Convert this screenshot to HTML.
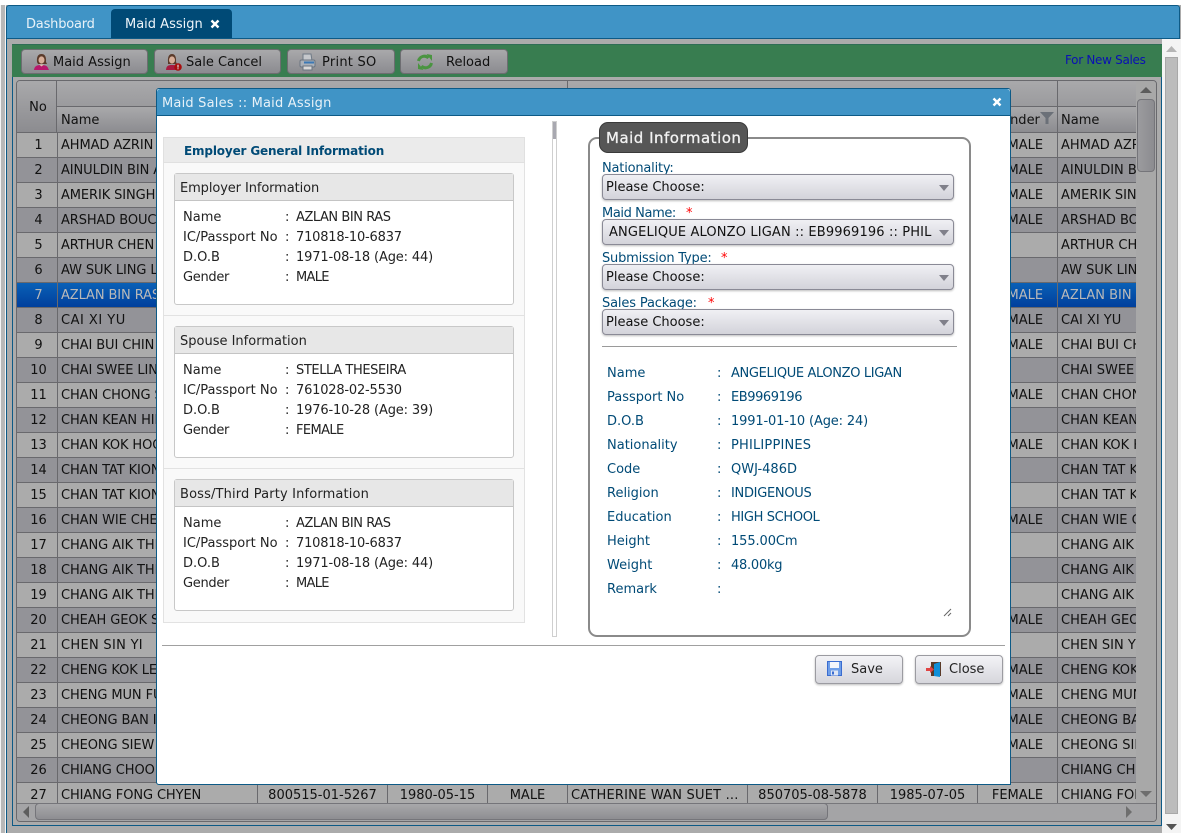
<!DOCTYPE html>
<html><head><meta charset="utf-8"><title>Maid Assign</title>
<style>
html,body{margin:0;padding:0;width:1181px;height:833px;overflow:hidden;background:#ababab;font:13px "DejaVu Sans",sans-serif;color:#111}
div,span{position:absolute;white-space:nowrap;box-sizing:border-box}
svg{position:absolute}
table{position:absolute;left:0;top:0;border-collapse:separate;border-spacing:0;table-layout:fixed;width:1119px;font:13px "DejaVu Sans",sans-serif;color:#111}
td{height:25px;padding:1px 0 0 3px;border-top:1px solid #69696d;border-left:1px solid #69696d;overflow:hidden;white-space:nowrap;box-sizing:border-box;line-height:22px}
td:first-child{border-left:0;text-align:center;padding-left:3px}
td:nth-child(2){letter-spacing:-.1px}
td.c{text-align:center;padding-left:0}
tr{background:#ababab}
tr.d{background:#939398}
tr.s{background:linear-gradient(#0a62b8,#003f9c);color:#b9b9b9}
.btn{height:25px;top:49px;border:1px solid #6d6d71;border-radius:4px;background:linear-gradient(#a9a9ab,#8b8b90);line-height:26px}
.btn span{top:0}
.hd{background:linear-gradient(#a9a9ab,#8c8c90)}
.card{left:174px;width:340px;height:132px;background:#fff;border:1px solid #c8c8c8;border-radius:3px}
.card .t{left:0;top:0;width:338px;height:27px;background:#e7e7e7;border-bottom:1px solid #c4c4c4;line-height:29px;padding-left:5px;color:#222}
.card span{color:#222;line-height:20px;margin-top:1px}
.lb{left:602px;color:#004a76;line-height:16px}
.lb b{color:#f00;font-weight:normal;position:absolute;top:0;letter-spacing:0}
.sel{left:602px;width:352px;height:26px;border:1px solid #8a8a96;border-radius:4px;background:linear-gradient(#f0f0f4,#d3d3da);box-shadow:0 1px 2px #bbb;color:#111;line-height:25px;padding-left:3px}
.sel i{position:absolute;left:336px;top:10px;width:0;height:0;border:5px solid transparent;border-top:6px solid #80808a;border-bottom:0}
.det{color:#004a76;line-height:16px}
.b2{top:655px;width:88px;height:29px;border:1px solid #9b9ba1;border-radius:4px;background:linear-gradient(#f3f3f6,#d6d6dc);box-shadow:0 1px 2px #bbb;color:#222;line-height:28px}
</style></head><body>

<!-- outer window -->
<div style="left:6px;top:5px;width:1174px;height:34px;background:#4094c6;border:1px solid #0d5a86;border-radius:3px 3px 0 0"></div>
<div style="left:6px;top:38px;width:1px;height:795px;background:#0d5a86"></div>
<div style="left:0;top:0;width:6px;height:833px;background:#f4f4f4"></div>
<div style="left:1px;top:0;width:4px;height:833px;background:#b8b8b8"></div>
<div style="left:0;top:0;width:1181px;height:5px;background:#fff"></div>
<span style="left:26px;top:16px;color:#e8f2f8;line-height:17px;letter-spacing:-.2px">Dashboard</span>
<div style="left:111px;top:9px;width:121px;height:29px;background:#004a76;border-radius:4px 4px 0 0"></div>
<span style="left:125px;top:16px;color:#eef5fa;line-height:17px">Maid Assign</span>
<svg style="left:210px;top:19px" width="10" height="10" viewBox="0 0 10 10"><path d="M1.500 1.500L8.500 8.500M8.500 1.500L1.500 8.500" stroke="#fff" stroke-width="2.400"/></svg>

<!-- inner panel border -->
<div style="left:12px;top:44px;width:1150px;height:782px;border:1px solid #0d5a86;border-top:0"></div>

<!-- green toolbar -->
<div style="left:12px;top:44px;width:1150px;height:33px;background:#387d50;border-top:1px solid #2f6d55"></div>
<div class="btn" style="left:21px;width:127px"><span style="left:31px">Maid Assign</span>
<svg style="left:9px;top:2px" width="20" height="20" viewBox="0 0 20 20"><path d="M6 10C5.500 4 7.500 2 10.500 2s5 2 4.500 8l1 2H7z" fill="#5a3a2a"/><ellipse cx="10.500" cy="8" rx="3" ry="3.600" fill="#d8ae98"/><path d="M3 18c.5-4 3-5 7-5s6.500 1 7 3l1 2z" fill="#b8186c"/><path d="M8 12.500h5l-2.500 2z" fill="#e3c0ae"/></svg></div>
<div class="btn" style="left:154px;width:127px"><span style="left:31px">Sale Cancel</span>
<svg style="left:8px;top:2px" width="20" height="20" viewBox="0 0 20 20"><path d="M5 10C4.500 4 6.500 2 9 2s4.500 2 4 8l1 2H5z" fill="#5a3a2a"/><ellipse cx="9" cy="8" rx="3" ry="3.600" fill="#d8ae98"/><path d="M3 18c.3-4 2-5 6-5s5 1 6 3v2z" fill="#a81a40"/><circle cx="15" cy="15" r="3.800" fill="#a80d0d"/><path d="M15 12.800v2.800M15 16.300v1" stroke="#ddd" stroke-width="1.200"/></svg></div>
<div class="btn" style="left:287px;width:108px"><span style="left:34px;letter-spacing:.25px">Print SO</span>
<svg style="left:10px;top:2px" width="19" height="20" viewBox="0 0 19 20"><path d="M5 2h8l1 7H5z" fill="#c5c8cc" stroke="#6f7a86"/><rect x="2" y="8" width="15" height="7" rx="1.500" fill="#aab0b8" stroke="#6a7480"/><rect x="6" y="9.500" width="10" height="2" fill="#3b78b4"/><rect x="5" y="14" width="9" height="4" fill="#d8d8d8" stroke="#6a7480"/></svg></div>
<div class="btn" style="left:400px;width:108px"><span style="left:45px">Reload</span>
<svg style="left:15px;top:3px" width="18" height="18" viewBox="0 0 18 18" fill="none" stroke="#4a9440" stroke-width="3"><path d="M2.500 8C3.500 3.500 9 1.500 12.500 5"/><path d="M15.500 10c-1 4.500-6.500 6.500-10 3"/><path d="M10.500 1l5.500 1v6z" fill="#4a9440" stroke="none"/><path d="M7.500 17L2 16v-6z" fill="#4a9440" stroke="none"/></svg></div>
<span style="left:1065px;top:53px;color:#0a10b4;font-size:12px;line-height:15px;letter-spacing:-.3px">For New Sales</span>

<!-- grid -->
<div style="left:16px;top:80px;width:1141px;height:742px;border:1px solid #69696d;border-radius:4px;background:#a8a8a8;overflow:hidden">
 <div style="left:0;top:0;width:1119px;height:51px;overflow:hidden" class="hd">
  <div class="hd" style="left:0;top:0;width:40px;height:51px;border-right:1px solid #69696d;text-align:center;line-height:54px;color:#111;padding-left:3px">No</div>
  <div style="left:40px;top:25px;width:1079px;height:1px;background:#69696d"></div>
  <div class="hd" style="left:40px;top:26px;width:1079px;height:25px"></div>
  <div style="left:550px;top:0;width:1px;height:26px;background:#69696d"></div>
  <div style="left:1040px;top:0;width:1px;height:51px;background:#69696d"></div>
  <span style="left:44px;top:31px;line-height:17px">Name</span>
  <span style="left:975px;top:31px;line-height:17px">Gender</span>
  <svg style="left:1023px;top:31px" width="14" height="12" viewBox="0 0 14 12"><path d="M0 0h14L8.500 6v6h-3V6z" fill="#6b7078"/></svg>
  <span style="left:1044px;top:31px;line-height:17px">Name</span>
 </div>
 <div style="left:0;top:51px;width:1119px;height:671px;overflow:hidden">
 <table><colgroup><col style="width:40px"><col style="width:200px"><col style="width:130px"><col style="width:100px"><col style="width:80px"><col style="width:180px"><col style="width:130px"><col style="width:100px"><col style="width:80px"><col style="width:79px"></colgroup>
 <tr><td>1</td><td>AHMAD AZRIN BIN</td><td></td><td></td><td></td><td></td><td></td><td></td><td class="c">FEMALE</td><td>AHMAD AZRIN BIN</td></tr>
 <tr class="d"><td>2</td><td>AINULDIN BIN ALI</td><td></td><td></td><td></td><td></td><td></td><td></td><td class="c">FEMALE</td><td>AINULDIN BIN ALI</td></tr>
 <tr><td>3</td><td>AMERIK SINGH</td><td></td><td></td><td></td><td></td><td></td><td></td><td class="c">FEMALE</td><td>AMERIK SINGH</td></tr>
 <tr class="d"><td>4</td><td>ARSHAD BOUCHER</td><td></td><td></td><td></td><td></td><td></td><td></td><td class="c">FEMALE</td><td>ARSHAD BOUCHER</td></tr>
 <tr><td>5</td><td>ARTHUR CHEN</td><td></td><td></td><td></td><td></td><td></td><td></td><td class="c"></td><td>ARTHUR CHEN</td></tr>
 <tr class="d"><td>6</td><td>AW SUK LING LIM</td><td></td><td></td><td></td><td></td><td></td><td></td><td class="c"></td><td>AW SUK LING LIM</td></tr>
 <tr class="s"><td>7</td><td>AZLAN BIN RAS</td><td></td><td></td><td></td><td></td><td></td><td></td><td class="c">FEMALE</td><td>AZLAN BIN RAS</td></tr>
 <tr class="d"><td>8</td><td style="letter-spacing:.5px">CAI XI YU</td><td></td><td></td><td></td><td></td><td></td><td></td><td class="c">FEMALE</td><td>CAI XI YU</td></tr>
 <tr><td>9</td><td>CHAI BUI CHIN</td><td></td><td></td><td></td><td></td><td></td><td></td><td class="c">FEMALE</td><td>CHAI BUI CHIN</td></tr>
 <tr class="d"><td>10</td><td>CHAI SWEE LIN</td><td></td><td></td><td></td><td></td><td></td><td></td><td class="c"></td><td>CHAI SWEE LIN</td></tr>
 <tr><td>11</td><td>CHAN CHONG SENG</td><td></td><td></td><td></td><td></td><td></td><td></td><td class="c">FEMALE</td><td>CHAN CHONG SENG</td></tr>
 <tr class="d"><td>12</td><td>CHAN KEAN HIN</td><td></td><td></td><td></td><td></td><td></td><td></td><td class="c"></td><td>CHAN KEAN HIN</td></tr>
 <tr><td>13</td><td>CHAN KOK HOONG</td><td></td><td></td><td></td><td></td><td></td><td></td><td class="c">FEMALE</td><td>CHAN KOK HOONG</td></tr>
 <tr class="d"><td>14</td><td>CHAN TAT KIONG</td><td></td><td></td><td></td><td></td><td></td><td></td><td class="c"></td><td>CHAN TAT KIONG</td></tr>
 <tr><td>15</td><td>CHAN TAT KIONG</td><td></td><td></td><td></td><td></td><td></td><td></td><td class="c"></td><td>CHAN TAT KIONG</td></tr>
 <tr class="d"><td>16</td><td>CHAN WIE CHENG</td><td></td><td></td><td></td><td></td><td></td><td></td><td class="c">FEMALE</td><td>CHAN WIE CHENG</td></tr>
 <tr><td>17</td><td>CHANG AIK THIAM</td><td></td><td></td><td></td><td></td><td></td><td></td><td class="c"></td><td>CHANG AIK THIAM</td></tr>
 <tr class="d"><td>18</td><td>CHANG AIK THIAM</td><td></td><td></td><td></td><td></td><td></td><td></td><td class="c"></td><td>CHANG AIK THIAM</td></tr>
 <tr><td>19</td><td>CHANG AIK THIAM</td><td></td><td></td><td></td><td></td><td></td><td></td><td class="c"></td><td>CHANG AIK THIAM</td></tr>
 <tr class="d"><td>20</td><td>CHEAH GEOK SIM</td><td></td><td></td><td></td><td></td><td></td><td></td><td class="c">FEMALE</td><td>CHEAH GEOK SIM</td></tr>
 <tr><td>21</td><td style="letter-spacing:.3px">CHEN SIN YI</td><td></td><td></td><td></td><td></td><td></td><td></td><td class="c"></td><td>CHEN SIN YI</td></tr>
 <tr class="d"><td>22</td><td>CHENG KOK LEONG</td><td></td><td></td><td></td><td></td><td></td><td></td><td class="c">FEMALE</td><td>CHENG KOK LEONG</td></tr>
 <tr><td>23</td><td>CHENG MUN FUN</td><td></td><td></td><td></td><td></td><td></td><td></td><td class="c">FEMALE</td><td>CHENG MUN FUN</td></tr>
 <tr class="d"><td>24</td><td>CHEONG BAN IN</td><td></td><td></td><td></td><td></td><td></td><td></td><td class="c">FEMALE</td><td>CHEONG BAN IN</td></tr>
 <tr><td>25</td><td>CHEONG SIEW MEI</td><td></td><td></td><td></td><td></td><td></td><td></td><td class="c">FEMALE</td><td>CHEONG SIEW MEI</td></tr>
 <tr class="d"><td>26</td><td>CHIANG CHOON</td><td></td><td></td><td></td><td></td><td></td><td></td><td class="c"></td><td>CHIANG CHOON</td></tr>
 <tr><td>27</td><td>CHIANG FONG CHYEN</td><td class="c">800515-01-5267</td><td class="c">1980-05-15</td><td class="c">MALE</td><td style="letter-spacing:.2px">CATHERINE WAN SUET ...</td><td class="c">850705-08-5878</td><td class="c">1985-07-05</td><td class="c">FEMALE</td><td>CHIANG FONG CHYEN</td></tr>
 </table>
 </div>
 <!-- grid scrollbars -->
 <div style="left:1119px;top:0;width:20px;height:740px;background:#a8a8a8"></div>
 <div style="left:0;top:722px;width:1139px;height:18px;background:#a4a4a6;border-top:1px solid #77777b"></div>
 <div style="left:1120px;top:18px;width:18px;height:73px;border:1px solid #75757a;border-radius:4px;background:linear-gradient(90deg,#9b9b9e,#8c8c90)"></div>
 <div style="left:18px;top:722px;width:793px;height:17px;border:1px solid #75757a;border-radius:4px;background:linear-gradient(#a8a8aa,#8e8e92)"></div>
 <svg style="left:1122px;top:5px" width="14" height="8" viewBox="0 0 14 8"><path d="M7 1L13 7H1z" fill="#5c5c5c"/></svg>
 <svg style="left:1122px;top:709px" width="14" height="8" viewBox="0 0 14 8"><path d="M7 7L13 1H1z" fill="#6e6e6e"/></svg>
 <svg style="left:5px;top:725px" width="8" height="12" viewBox="0 0 8 12"><path d="M1 6L7 0V12z" fill="#5e5e5e"/></svg>
 <svg style="left:1108px;top:725px" width="8" height="12" viewBox="0 0 8 12"><path d="M7 6L1 0V12z" fill="#6e6e6e"/></svg>
</div>

<!-- outer scrollbar -->
<div style="left:1162px;top:39px;width:19px;height:794px;background:#f4f4f4"></div>
<div style="left:1165px;top:57px;width:13px;height:757px;background:#bcbcbc;border:1px solid #a8a8a8"></div>
<svg style="left:1165px;top:45px" width="13" height="8" viewBox="0 0 13 8"><path d="M6.500 1L12 7H1z" fill="#b5b5b5"/></svg>
<svg style="left:1165px;top:823px" width="13" height="8" viewBox="0 0 13 8"><path d="M6.500 7L12 1H1z" fill="#555"/></svg>

<!-- modal -->
<div style="left:156px;top:88px;width:855px;height:697px;background:#fff;border:1px solid #0d5a86;border-radius:3px 3px 0 3px"></div>
<div style="left:157px;top:89px;width:853px;height:27px;background:#4094c6;border-bottom:1px solid #0d5a86;border-radius:3px 3px 0 0"></div>
<span style="left:162px;top:95px;color:#e8f2f8;line-height:17px;letter-spacing:.2px">Maid Sales :: Maid Assign</span>
<svg style="left:992px;top:97px" width="10" height="10" viewBox="0 0 10 10"><path d="M1.500 1.500L8.500 8.500M8.500 1.500L1.500 8.500" stroke="#fff" stroke-width="2.400"/></svg>

<!-- left panel -->
<div style="left:163px;top:137px;width:362px;height:486px;background:#f9f9f9;border:1px solid #e2e2e2"></div>
<div style="left:163px;top:137px;width:362px;height:26px;background:#ebebeb;border:1px solid #e0e0e0"></div>
<span style="left:184px;top:143px;color:#004a76;font-weight:bold;font-size:12px;line-height:16px;letter-spacing:-.15px">Employer General Information</span>
<div style="left:164px;top:315px;width:360px;height:1px;background:#e2e2e2"></div>
<div style="left:164px;top:468px;width:360px;height:1px;background:#e2e2e2"></div>

<div class="card" style="top:173px"><div class="t" style="letter-spacing:-.1px">Employer Information</div>
<span style="left:8px;top:33px">Name</span><span style="left:110px;top:33px">:</span><span style="left:121px;top:33px;letter-spacing:-.45px">AZLAN BIN RAS</span>
<span style="left:8px;top:53px">IC/Passport No</span><span style="left:110px;top:53px">:</span><span style="left:121px;top:53px;letter-spacing:-.2px">710818-10-6837</span>
<span style="left:8px;top:73px">D.O.B</span><span style="left:110px;top:73px">:</span><span style="left:121px;top:73px;letter-spacing:-.15px">1971-08-18 (Age: 44)</span>
<span style="left:8px;top:93px;letter-spacing:-.3px">Gender</span><span style="left:110px;top:93px">:</span><span style="left:121px;top:93px;letter-spacing:-.7px">MALE</span></div>

<div class="card" style="top:326px"><div class="t">Spouse Information</div>
<span style="left:8px;top:33px">Name</span><span style="left:110px;top:33px">:</span><span style="left:121px;top:33px;letter-spacing:-.4px">STELLA THESEIRA</span>
<span style="left:8px;top:53px">IC/Passport No</span><span style="left:110px;top:53px">:</span><span style="left:121px;top:53px;letter-spacing:-.2px">761028-02-5530</span>
<span style="left:8px;top:73px">D.O.B</span><span style="left:110px;top:73px">:</span><span style="left:121px;top:73px;letter-spacing:-.15px">1976-10-28 (Age: 39)</span>
<span style="left:8px;top:93px;letter-spacing:-.3px">Gender</span><span style="left:110px;top:93px">:</span><span style="left:121px;top:93px;letter-spacing:-.6px">FEMALE</span></div>

<div class="card" style="top:479px"><div class="t" style="letter-spacing:.15px">Boss/Third Party Information</div>
<span style="left:8px;top:33px">Name</span><span style="left:110px;top:33px">:</span><span style="left:121px;top:33px;letter-spacing:-.45px">AZLAN BIN RAS</span>
<span style="left:8px;top:53px">IC/Passport No</span><span style="left:110px;top:53px">:</span><span style="left:121px;top:53px;letter-spacing:-.2px">710818-10-6837</span>
<span style="left:8px;top:73px">D.O.B</span><span style="left:110px;top:73px">:</span><span style="left:121px;top:73px;letter-spacing:-.15px">1971-08-18 (Age: 44)</span>
<span style="left:8px;top:93px;letter-spacing:-.3px">Gender</span><span style="left:110px;top:93px">:</span><span style="left:121px;top:93px;letter-spacing:-.7px">MALE</span></div>

<!-- splitter -->
<div style="left:552px;top:121px;width:5px;height:516px;border:1px solid #cfcfcf"></div>
<div style="left:553px;top:122px;width:3px;height:17px;background:#a8a8b0"></div>

<!-- fieldset -->
<div style="left:588px;top:137px;width:383px;height:500px;border:2px solid #8a8a8a;border-radius:9px"></div>
<div style="left:599px;top:122px;width:149px;height:31px;background:#565656;border:1px solid #3a3a3a;border-radius:9px;color:#f2f2f2;font-size:15px;line-height:31px;padding-left:6px;letter-spacing:.5px;-webkit-text-stroke:.3px #f2f2f2">Maid Information</div>

<span class="lb" style="top:161px;letter-spacing:-.2px">Nationality:</span>
<div class="sel" style="top:174px">Please Choose:<i></i></div>
<span class="lb" style="top:206px;letter-spacing:-.4px">Maid Name:<b style="left:84px">*</b></span>
<div class="sel" style="top:219px;padding-left:6px;letter-spacing:.14px">ANGELIQUE ALONZO LIGAN :: EB9969196 :: PHIL<i></i></div>
<span class="lb" style="top:251px;letter-spacing:-.2px">Submission Type:<b style="left:119px">*</b></span>
<div class="sel" style="top:264px">Please Choose:<i></i></div>
<span class="lb" style="top:296px;letter-spacing:-.15px">Sales Package:<b style="left:106px">*</b></span>
<div class="sel" style="top:309px">Please Choose:<i></i></div>
<div style="left:602px;top:346px;width:355px;height:1px;background:#9a9a9a"></div>

<span class="det" style="left:607px;top:366px">Name</span><span class="det" style="left:717px;top:366px">:</span><span class="det" style="left:731px;top:366px;letter-spacing:-.36px">ANGELIQUE ALONZO LIGAN</span>
<span class="det" style="left:607px;top:390px">Passport No</span><span class="det" style="left:717px;top:390px">:</span><span class="det" style="left:731px;top:390px;letter-spacing:-.44px">EB9969196</span>
<span class="det" style="left:607px;top:414px">D.O.B</span><span class="det" style="left:717px;top:414px">:</span><span class="det" style="left:731px;top:414px;letter-spacing:-.15px">1991-01-10 (Age: 24)</span>
<span class="det" style="left:607px;top:438px">Nationality</span><span class="det" style="left:717px;top:438px">:</span><span class="det" style="left:731px;top:438px;letter-spacing:.18px">PHILIPPINES</span>
<span class="det" style="left:607px;top:462px">Code</span><span class="det" style="left:717px;top:462px">:</span><span class="det" style="left:731px;top:462px">QWJ-486D</span>
<span class="det" style="left:607px;top:486px">Religion</span><span class="det" style="left:717px;top:486px">:</span><span class="det" style="left:731px;top:486px;letter-spacing:-.3px">INDIGENOUS</span>
<span class="det" style="left:607px;top:510px">Education</span><span class="det" style="left:717px;top:510px">:</span><span class="det" style="left:731px;top:510px;letter-spacing:-.36px">HIGH SCHOOL</span>
<span class="det" style="left:607px;top:534px">Height</span><span class="det" style="left:717px;top:534px">:</span><span class="det" style="left:731px;top:534px;letter-spacing:-.1px">155.00Cm</span>
<span class="det" style="left:607px;top:558px">Weight</span><span class="det" style="left:717px;top:558px">:</span><span class="det" style="left:731px;top:558px;letter-spacing:-.25px">48.00kg</span>
<span class="det" style="left:607px;top:582px">Remark</span><span class="det" style="left:717px;top:582px">:</span>
<svg style="left:943px;top:608px" width="9" height="9" viewBox="0 0 9 9"><path d="M1 8L8 1M5 8L8 5" stroke="#666" stroke-width="1"/></svg>

<div style="left:162px;top:645px;width:843px;height:1px;background:#a0a0a0"></div>

<div class="b2" style="left:815px"><span style="left:35px;top:0">Save</span>
<svg style="left:11px;top:5px" width="16" height="16" viewBox="0 0 16 16"><rect x=".5" y=".5" width="14" height="14" fill="#6e9ee8" stroke="#3a6cd0"/><rect x="3" y="1" width="9" height="6" fill="#f4f6fb"/><rect x="4" y="9.500" width="7" height="5" fill="#dfe6f4"/><rect x="5" y="10.500" width="2" height="3" fill="#3a6cd0"/></svg></div>
<div class="b2" style="left:915px"><span style="left:33px;top:0">Close</span>
<svg style="left:10px;top:5px" width="17" height="17" viewBox="0 0 17 17"><rect x="5" y="1" width="10" height="14" fill="#5a3a28"/><path d="M8 3l6-2v15l-6-1z" fill="#0f8fd8"/><path d="M0 7h4V5l4 3.500L4 12v-2H0z" fill="#e04444"/></svg></div>

</body></html>
